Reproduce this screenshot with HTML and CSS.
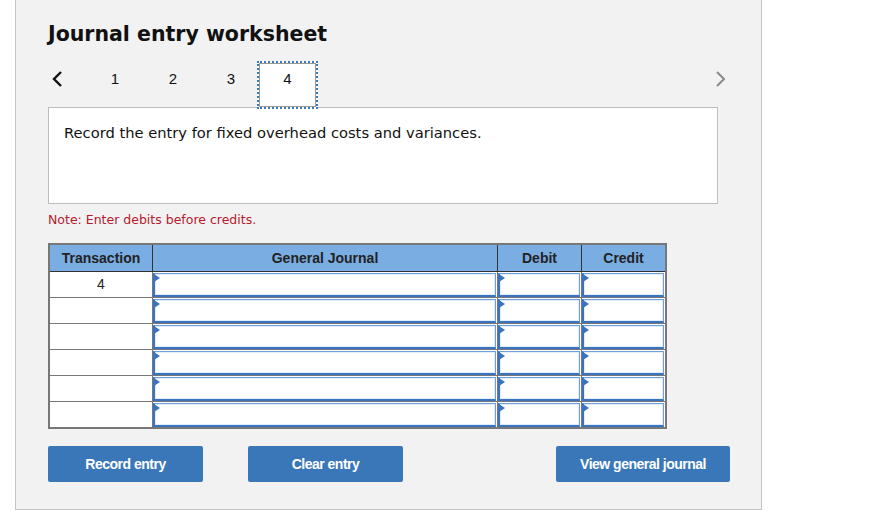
FILE: index.html
```html
<!DOCTYPE html>
<html lang="en">
<head>
    <meta charset="UTF-8">
    <title>Journal entry worksheet</title>
    <link rel="stylesheet" href="styles.css">
</head>
<body>
    <!-- Worksheet panel -->
    <div class="panel">
        <h1 class="title">Journal entry worksheet</h1>

        <div class="tabs">
            <button class="nav-btn prev" aria-label="Previous">
                <svg width="12" height="18" viewBox="0 0 12 18"><path d="M10 2 L3 9 L10 16" fill="none" stroke="#111" stroke-width="2.4"/></svg>
            </button>
            <span class="tab">1</span>
            <span class="tab">2</span>
            <span class="tab">3</span>
            <span class="tab active">4</span>
            <button class="nav-btn next" aria-label="Next">
                <svg width="12" height="18" viewBox="0 0 12 18"><path d="M2 2 L9 9 L2 16" fill="none" stroke="#8a8a8a" stroke-width="2"/></svg>
            </button>
        </div>

        <div class="question">
            Record the entry for fixed overhead costs and variances.
        </div>

        <p class="note">Note: Enter debits before credits.</p>

        <table class="journal">
            <thead>
                <tr>
                    <th class="col-trans">Transaction</th>
                    <th class="col-acct">General Journal</th>
                    <th class="col-amt">Debit</th>
                    <th class="col-amt">Credit</th>
                </tr>
            </thead>
            <tbody>
                <tr>
                    <td class="trans">4</td>
                    <td><div class="entry"></div></td>
                    <td><div class="entry"></div></td>
                    <td><div class="entry"></div></td>
                </tr>
                <tr>
                    <td class="trans"></td>
                    <td><div class="entry"></div></td>
                    <td><div class="entry"></div></td>
                    <td><div class="entry"></div></td>
                </tr>
                <tr>
                    <td class="trans"></td>
                    <td><div class="entry"></div></td>
                    <td><div class="entry"></div></td>
                    <td><div class="entry"></div></td>
                </tr>
                <tr>
                    <td class="trans"></td>
                    <td><div class="entry"></div></td>
                    <td><div class="entry"></div></td>
                    <td><div class="entry"></div></td>
                </tr>
                <tr>
                    <td class="trans"></td>
                    <td><div class="entry"></div></td>
                    <td><div class="entry"></div></td>
                    <td><div class="entry"></div></td>
                </tr>
                <tr>
                    <td class="trans"></td>
                    <td><div class="entry"></div></td>
                    <td><div class="entry"></div></td>
                    <td><div class="entry"></div></td>
                </tr>
            </tbody>
        </table>

        <div class="actions">
            <button class="btn">Record entry</button>
            <button class="btn">Clear entry</button>
            <button class="btn btn-wide">View general journal</button>
        </div>
    </div>
</body>
</html>
```

FILE: styles.css
```css
/* Base styles */
body {
    margin: 0;
    background-color: #fff;
    font-family: "DejaVu Sans", Verdana, sans-serif;
    color: #111;
}

.panel {
    box-sizing: border-box;
    width: 747px;
    height: 510px;
    margin-left: 15px;
    padding: 21px 32px 0 32px;
    background-color: #f2f2f2;
    border: 1px solid #c4c4c4;
    border-top: none;
}

.title {
    margin: 0;
    font-size: 20.5px;
    line-height: 26px;
    font-weight: bold;
    color: #111;
}

/* Tabs */
.tabs {
    display: flex;
    align-items: flex-start;
    height: 48px;
    margin-top: 14px;
    margin-bottom: -2px;
    position: relative;
    z-index: 1;
    font-family: "Liberation Sans", Arial, sans-serif;
    font-size: 15px;
}

.nav-btn {
    display: flex;
    align-items: center;
    height: 36px;
    padding: 0;
    border: none;
    background: none;
}

.nav-btn.prev {
    width: 38px;
    padding-left: 3px;
}

.nav-btn.next {
    margin-left: auto;
    margin-right: 2px;
}

.tab {
    width: 58px;
    text-align: center;
    line-height: 36px;
}

.tab.active {
    box-sizing: border-box;
    width: 61px;
    height: 48px;
    margin-left: -3px;
    line-height: 32px;
    background-color: #fff;
    border: 2px dotted #3a78c0;
    outline: 1px solid #9a9a9a;
    outline-offset: -3px;
}

/* Question box */
.question {
    box-sizing: border-box;
    width: 670px;
    height: 97px;
    padding: 16px 15px;
    background-color: #fff;
    border: 1px solid #bdbdbd;
    font-size: 14.7px;
    line-height: 18px;
}

.note {
    margin: 8px 0 15px 0;
    font-size: 12.5px;
    line-height: 16px;
    color: #b5192e;
}

/* Journal table */
.journal {
    border-collapse: collapse;
    border: 2px solid #777;
    font-family: "Liberation Sans", Arial, sans-serif;
    font-size: 14px;
}

.journal th {
    height: 26px;
    padding: 0;
    background-color: #7aade2;
    border: 1px solid #333;
    border-top-color: #777;
    font-weight: bold;
    color: #222;
}

.col-trans { width: 102px; }
.col-acct { width: 344px; }
.col-amt { width: 83px; }

.journal td {
    height: 25px;
    padding: 0;
    background-color: #fff;
    border: 1px solid #777;
}

.journal td.trans {
    text-align: center;
    vertical-align: top;
    padding-top: 4px;
    height: 21px;
    color: #222;
}

.entry {
    position: relative;
    box-sizing: border-box;
    height: 24px;
    margin: 1px 1px 0 0;
    border: 1px solid #6f9fd8;
    border-left: 2px solid #3a74c0;
    border-bottom: 2px solid #3a74c0;
    box-shadow: inset 0 0 0 1px #e4eefa;
}

.entry::before {
    content: "";
    position: absolute;
    left: -1px;
    top: 0;
    border-top: 4px solid transparent;
    border-bottom: 4px solid transparent;
    border-left: 6px solid #3a74c0;
}

/* Buttons */
.actions {
    display: flex;
    margin-top: 17px;
}

.btn {
    flex-shrink: 0;
    width: 155px;
    height: 36px;
    margin-right: 45px;
    padding: 0;
    background-color: #3a77b9;
    color: #fff;
    border: none;
    border-radius: 2px;
    font-family: "Liberation Sans", Arial, sans-serif;
    font-size: 14px;
    font-weight: bold;
    letter-spacing: -0.5px;
}

.btn-wide {
    width: 174px;
    margin-left: 108px;
    margin-right: 0;
}
```
